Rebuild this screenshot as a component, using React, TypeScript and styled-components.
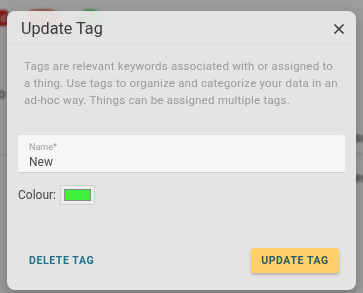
import React, { useState } from 'react';
import styled, { createGlobalStyle } from 'styled-components';

const GlobalStyle = createGlobalStyle`
    html, body {
        margin: 0;
        padding: 0;
        height: 100%;
        overflow: hidden;
        font-family: Roboto, "Liberation Sans", sans-serif;
        background: #f4f4f4;
    }
`;

export default function App() {
    const [name, setName] = useState('New');
    const [colour] = useState('#3cf03c');

    return (
        <>
            <GlobalStyle />

            {/* Page behind the modal */}
            <Page>
                <ChipRow>
                    <Badge>d</Badge>
                    <Chip tone="#e0896a" width={37} />
                    <Chip tone="#5fd36a" width={26} />
                </ChipRow>
                <SideText>o</SideText>
                <RightText gap={30}>sc</RightText>
                <Divider />
                <RightText gap={16}>es</RightText>
            </Page>

            <Overlay>
                <Dialog>
                    <DialogHeader>
                        <Title>Update Tag</Title>
                        <CloseButton aria-label="close">
                            <svg width="12" height="12" viewBox="0 0 12 12">
                                <path d="M1.5 1.5 L10.5 10.5 M10.5 1.5 L1.5 10.5" stroke="#333" strokeWidth="1.5" />
                            </svg>
                        </CloseButton>
                    </DialogHeader>

                    <DialogBody>
                        <Description>
                            Tags are relevant keywords associated with or assigned to a thing. Use tags to organize and categorize your data in an ad-hoc way. Things can be assigned multiple tags.
                        </Description>

                        <Field>
                            <FieldLabel>Name*</FieldLabel>
                            <FieldInput value={name} onChange={(e) => setName(e.target.value)} />
                        </Field>

                        <ColourRow>
                            <span>Colour:</span>
                            <Swatch>
                                <SwatchFill style={{ background: colour }} />
                            </Swatch>
                        </ColourRow>
                    </DialogBody>

                    <Actions>
                        <TextButton>Delete Tag</TextButton>
                        <PrimaryButton>Update Tag</PrimaryButton>
                    </Actions>
                </Dialog>
            </Overlay>
        </>
    );
}

const Page = styled.div`
    height: 100vh;
    display: flex;
    flex-direction: column;
    filter: blur(1px);
`;

const ChipRow = styled.div`
    display: flex;
    align-items: flex-start;
    gap: 16px;
    padding-top: 9px;
    margin-left: -8px;
`;

const Badge = styled.div`
    width: 16px;
    height: 16px;
    margin-top: 1px;
    border-radius: 3px;
    background: #c62828;
    color: #fff;
    font-size: 10px;
    display: flex;
    align-items: center;
    justify-content: flex-end;
    padding-right: 2px;
    box-sizing: border-box;
`;

const Chip = styled.div<{ tone: string; width: number }>`
    width: ${p => p.width}px;
    height: 24px;
    border-radius: 12px;
    background: ${p => p.tone};
`;

const SideText = styled.div`
    margin-top: 53px;
    margin-left: -2px;
    font-size: 13px;
    color: #333;
`;

const RightText = styled.div<{ gap: number }>`
    align-self: flex-end;
    margin-top: ${p => p.gap}px;
    margin-right: -4px;
    font-size: 12px;
    color: #333;
`;

const Divider = styled.div`
    margin-top: 9px;
    height: 1px;
    background: #c8c8c8;
`;

const Overlay = styled.div`
    position: fixed;
    inset: 0;
    background: rgba(0, 0, 0, 0.36);
    padding: 11px 7px 0 7px;
    box-sizing: border-box;
`;

const Dialog = styled.div`
    width: 349px;
    height: 279px;
    box-sizing: border-box;
    border-radius: 8px;
    background: rgba(236, 236, 236, 0.9);
    backdrop-filter: blur(8px);
    box-shadow: 0 6px 14px rgba(0, 0, 0, 0.25);
    display: flex;
    flex-direction: column;
    overflow: hidden;
`;

const DialogHeader = styled.div`
    display: flex;
    align-items: center;
    justify-content: space-between;
    height: 33px;
    padding: 3px 11px 0 14px;
    box-sizing: border-box;
    border-bottom: 1px solid #dcdcdc;
`;

const Title = styled.h2`
    margin: 0;
    font-size: 16.2px;
    font-weight: 400;
    color: #3a3a3a;
`;

const CloseButton = styled.button`
    border: none;
    background: none;
    padding: 0;
    width: 12px;
    height: 12px;
    display: flex;
    cursor: pointer;
`;

const DialogBody = styled.div`
    display: flex;
    flex-direction: column;
    padding: 14px 11px 0 11px;
    flex: 1;
`;

const Description = styled.p`
    width: 317px;
    margin: 0 0 26px 6px;
    font-size: 11.5px;
    line-height: 17px;
    letter-spacing: 0.2px;
    color: #999;
`;

const Field = styled.label`
    display: flex;
    flex-direction: column;
    height: 38px;
    box-sizing: border-box;
    padding: 7px 11px 0 11px;
    background: #f6f6f6;
    border-radius: 3px 3px 0 0;
    border-bottom: 1px solid #cfcfcf;
`;

const FieldLabel = styled.span`
    font-size: 9px;
    line-height: 11px;
    color: #9a9a9a;
`;

const FieldInput = styled.input`
    border: none;
    outline: none;
    background: transparent;
    padding: 0;
    margin-top: 2px;
    font-family: inherit;
    font-size: 12px;
    color: #4a4a4a;
`;

const ColourRow = styled.div`
    display: flex;
    align-items: center;
    gap: 4px;
    margin-top: 12px;
    font-size: 12px;
    color: #444;
`;

const Swatch = styled.div`
    width: 35px;
    height: 20px;
    box-sizing: border-box;
    padding: 3px;
    border: 1px solid #cfcfcf;
    background: #ededed;
    display: flex;
`;

const SwatchFill = styled.div`
    flex: 1;
    border: 1px solid #8a8a8a;
`;

const Actions = styled.div`
    display: flex;
    align-items: center;
    justify-content: space-between;
    padding: 0 17px 17px 15px;
`;

const TextButton = styled.button`
    border: none;
    background: none;
    padding: 6px 7px;
    font-family: inherit;
    font-size: 10.5px;
    font-weight: 700;
    letter-spacing: 0.6px;
    text-transform: uppercase;
    color: #21718a;
    cursor: pointer;
`;

const PrimaryButton = styled.button`
    border: none;
    width: 88px;
    height: 25px;
    border-radius: 3px;
    background: #ffd166;
    box-shadow: 0 2px 3px rgba(0, 0, 0, 0.22);
    font-family: inherit;
    font-size: 10.5px;
    font-weight: 700;
    letter-spacing: 0.6px;
    text-transform: uppercase;
    color: #2d5a66;
    cursor: pointer;
`;
